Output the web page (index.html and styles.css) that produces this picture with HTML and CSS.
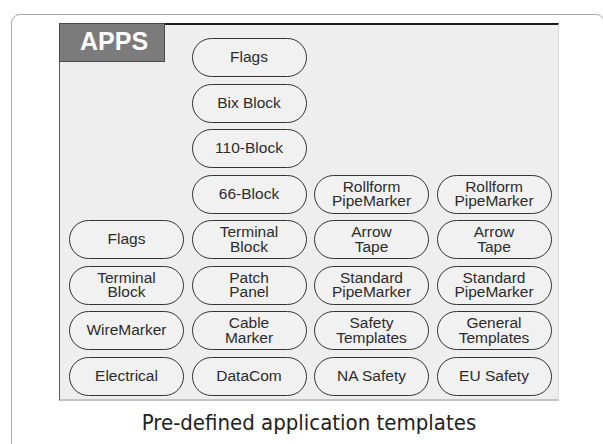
FILE: index.html
```html
<!DOCTYPE html>
<html lang="en">

<head>
  <meta charset="UTF-8">
  <meta name="viewport" content="width=device-width, initial-scale=1.0">
  <title>Pre-defined application templates</title>
  <link rel="stylesheet" href="styles.css">
</head>

<body>
  <div class="figure-card">
    <div class="apps-screen">
      <!-- row 1 -->
      <div class="apps-label">APPS</div>
      <div class="pill">Flags</div>
      <span class="blank"></span>
      <span class="blank"></span>
      <!-- row 2 -->
      <span class="blank"></span>
      <div class="pill">Bix Block</div>
      <span class="blank"></span>
      <span class="blank"></span>
      <!-- row 3 -->
      <span class="blank"></span>
      <div class="pill">110-Block</div>
      <span class="blank"></span>
      <span class="blank"></span>
      <!-- row 4 -->
      <span class="blank"></span>
      <div class="pill">66-Block</div>
      <div class="pill">Rollform<br>PipeMarker</div>
      <div class="pill">Rollform<br>PipeMarker</div>
      <!-- row 5 -->
      <div class="pill">Flags</div>
      <div class="pill">Terminal<br>Block</div>
      <div class="pill">Arrow<br>Tape</div>
      <div class="pill">Arrow<br>Tape</div>
      <!-- row 6 -->
      <div class="pill">Terminal<br>Block</div>
      <div class="pill">Patch<br>Panel</div>
      <div class="pill">Standard<br>PipeMarker</div>
      <div class="pill">Standard<br>PipeMarker</div>
      <!-- row 7 -->
      <div class="pill">WireMarker</div>
      <div class="pill">Cable<br>Marker</div>
      <div class="pill">Safety<br>Templates</div>
      <div class="pill">General<br>Templates</div>
      <!-- row 8 -->
      <div class="pill">Electrical</div>
      <div class="pill">DataCom</div>
      <div class="pill">NA Safety</div>
      <div class="pill">EU Safety</div>
    </div>
    <div class="caption">Pre-defined application templates</div>
  </div>
</body>

</html>
```

FILE: styles.css
```css
body {
  margin: 0;
  background-color: #ffffff;
  overflow: hidden;
  font-family: "Liberation Sans", Arial, sans-serif;
}

.figure-card {
  box-sizing: border-box;
  width: 594px;
  height: 440px;
  margin: 14px 0 0 11px;
  border: 1px solid #ababab;
  border-radius: 9px;
  background-color: #ffffff;
}

.apps-screen {
  box-sizing: border-box;
  width: 500px;
  height: 378px;
  margin: 8px 0 0 47px;
  padding: 13px 0 0 9px;
  background-color: #eeeeee;
  border-top: 2px solid #1c1c1c;
  border-left: 1px solid #5a5a5a;
  border-right: 1px solid #dddddd;
  border-bottom: 2px solid #c4c4c4;
  display: grid;
  grid-template-columns: repeat(4, 115px);
  grid-auto-rows: 39px;
  column-gap: 7.5px;
  row-gap: 6.5px;
}

.apps-label {
  box-sizing: border-box;
  width: 106px;
  height: 39px;
  margin: -15px 0 0 -10px;
  padding-left: 20px;
  background-color: #7b7b7b;
  border: 1px solid #4a4a4a;
  color: #ffffff;
  font-weight: bold;
  font-size: 25px;
  line-height: 35px;
}

.pill {
  box-sizing: border-box;
  display: flex;
  align-items: center;
  justify-content: center;
  text-align: center;
  border: 1.8px solid #333333;
  border-radius: 20px;
  background-color: #f1f1f1;
  color: #2c2c2c;
  font-size: 15.5px;
  line-height: 14.5px;
}

.caption {
  width: 500px;
  margin: 9px 0 0 47px;
  text-align: center;
  font-family: "Liberation Sans Narrow", "DejaVu Sans Condensed", sans-serif;
  font-size: 22px;
  line-height: 26px;
  color: #222222;
}
```
